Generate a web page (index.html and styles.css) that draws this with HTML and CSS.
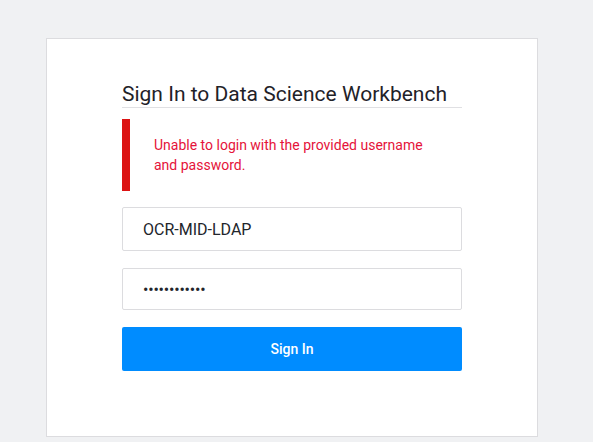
FILE: index.html
```html
<!DOCTYPE html>
<html>
<head>
<meta charset="utf-8">
<link rel="stylesheet" href="styles.css">
</head>
<body>
<div class="card">
  <form class="form">
    <h1 class="title">Sign In to Data Science Workbench</h1>
    <div class="alert">
      <p class="alert-text">Unable to login with the provided username and password.</p>
    </div>
    <div class="field">OCR-MID-LDAP</div>
    <div class="field field-pass">••••••••••••</div>
    <button class="btn" type="button">Sign In</button>
  </form>
</div>
</body>
</html>
```
FILE: styles.css
```css
html, body {
  margin: 0;
  padding: 0;
  background: #f0f1f3;
  font-family: Roboto, "Liberation Sans", sans-serif;
}
.card {
  box-sizing: border-box;
  margin: 38px 0 0 46px;
  width: 492px;
  height: 399px;
  background: #fff;
  border: 1px solid #dcdcdf;
  padding: 43px 75px 0 75px;
}
.form {
  display: flex;
  flex-direction: column;
}
.title {
  margin: 0;
  font-size: 21px;
  font-weight: 400;
  line-height: 24px;
  color: #1f2228;
  padding-bottom: 1px;
  border-bottom: 1px solid #e0e0e3;
}
.alert {
  margin-top: 11px;
  height: 72px;
  border-left: 8px solid #dc1313;
  display: flex;
  align-items: center;
  padding-left: 24px;
}
.alert-text {
  margin: 0;
  width: 290px;
  font-size: 14px;
  line-height: 20px;
  color: #e5133a;
}
.field {
  box-sizing: border-box;
  margin-top: 16px;
  height: 44px;
  border: 1px solid #dcdcdf;
  border-radius: 2px;
  padding: 0 20px;
  display: flex;
  align-items: center;
  font-size: 16px;
  color: #22252b;
}
.field-pass {
  margin-top: 17px;
  height: 42px;
  letter-spacing: -0.2px;
}
.btn {
  margin-top: 17px;
  height: 44px;
  border: none;
  border-radius: 2px;
  background: #008cff;
  color: #fff;
  font-family: Roboto, "Liberation Sans", sans-serif;
  font-size: 14px;
  font-weight: 500;
}
```
